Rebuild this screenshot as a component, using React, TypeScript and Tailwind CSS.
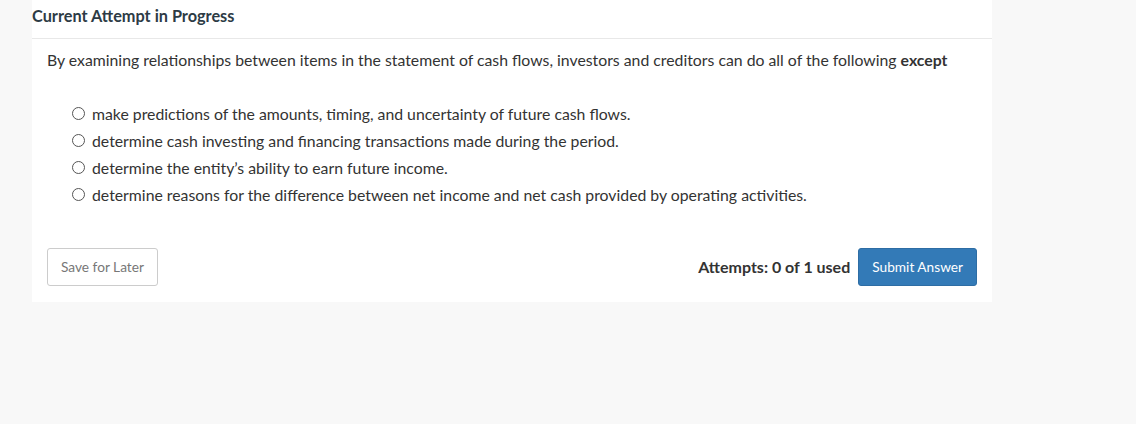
import React, { useState } from "react";

const options = [
	"make predictions of the amounts, timing, and uncertainty of future cash flows.",
	"determine cash investing and financing transactions made during the period.",
	"determine the entity’s ability to earn future income.",
	"determine reasons for the difference between net income and net cash provided by operating activities.",
];

const App = () => {
	const [picked, setPicked] = useState<number | null>(null);
	return (
		<div className="min-h-[424px] bg-[#f8f8f8] font-['Lato','Open_Sans',sans-serif] text-[#333]">
			<div className="ml-8 w-[960px] bg-white pb-4">
				<div className="flex h-[39px] items-center border-b border-[#e8e8e8] pb-[5px] text-[16.3px] font-bold text-[#2d3b45]">
					Current Attempt in Progress
				</div>
				<div className="px-[15px]">
					<p className="mt-[11px] text-[15.8px] leading-5">
						By examining relationships between items in the statement of cash flows,
						investors and creditors can do all of the following <b>except</b>
					</p>
					<div className="mt-[30px] flex flex-col pl-[25px]">
						{options.map((o, i) => (
							<label
								key={i}
								className="flex h-[27px] cursor-pointer items-center gap-[7px] text-[15.8px]"
								onClick={() => setPicked(i)}
							>
								<span className="flex h-[13px] w-[13px] items-center justify-center rounded-full border border-[#555]">
									{picked === i && <span className="h-[7px] w-[7px] rounded-full bg-[#333]" />}
								</span>
								<span>{o}</span>
							</label>
						))}
					</div>
					<div className="mt-[40px] flex items-center justify-between">
						<button className="h-[38px] rounded-[3px] border border-[#ccc] bg-white px-[13px] text-[13.7px] text-[#777]">
							Save for Later
						</button>
						<div className="flex items-center gap-2">
							<span className="text-[16px] font-bold text-[#333]">Attempts: 0 of 1 used</span>
							<button className="h-[38px] rounded-[3px] border border-[#2e6da4] bg-[#337ab7] px-[13px] text-[13.7px] text-white">
								Submit Answer
							</button>
						</div>
					</div>
				</div>
			</div>
		</div>
	);
};

export default App;
